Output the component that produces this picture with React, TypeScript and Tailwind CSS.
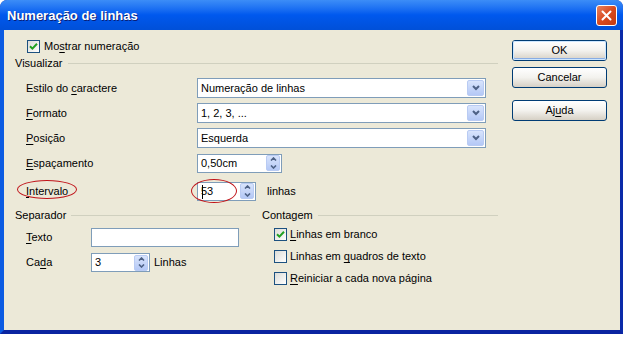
import React from 'react';

const font = { fontFamily: '"Liberation Sans", Arial, sans-serif' };

function Check({ checked = false }: { checked?: boolean }) {
  return (
    <span className="relative flex h-[13px] w-[13px] shrink-0 items-center justify-center border border-[#1C5180] bg-gradient-to-br from-[#DCDCD7] to-white">
      {checked && (
        <svg width="9" height="9" viewBox="0 0 9 9">
          <path d="M1 4.2 L3.4 6.6 L8 1.8" fill="none" stroke="#21A121" strokeWidth="2" />
        </svg>
      )}
    </span>
  );
}

function U({ children }: { children: React.ReactNode }) {
  return <span className="underline underline-offset-[2px]">{children}</span>;
}

function Header({ title, width }: { title: string; width?: string }) {
  return (
    <div className={`flex h-[14px] items-center gap-[5px] ${width ?? ''}`}>
      <span>{title}</span>
      <span className="h-px flex-1 bg-[#D0D0BF]" />
    </div>
  );
}

function Combo({ value }: { value: string }) {
  return (
    <div className="flex h-[20px] w-[289px] items-center border border-[#7F9DB9] bg-white pl-[3px] pr-px">
      <span className="flex-1">{value}</span>
      <span className="flex h-[16px] w-[17px] items-center justify-center rounded-[2px] border border-[#B9CBF3] bg-gradient-to-b from-[#D8E4FC] to-[#B4C8F6]">
        <svg width="8" height="6" viewBox="0 0 8 6">
          <path d="M1 1 L4 4 L7 1" fill="none" stroke="#4D6185" strokeWidth="2" />
        </svg>
      </span>
    </div>
  );
}

function SpinBtn() {
  return (
    <span className="flex h-[16px] w-[14px] flex-col overflow-hidden rounded-[2px] border border-[#B9CBF3] bg-gradient-to-b from-[#D8E4FC] to-[#B4C8F6]">
      <span className="flex flex-1 items-center justify-center border-b border-[#C8D6F6]">
        <svg width="7" height="4" viewBox="0 0 7 4">
          <path d="M1 3.5 L3.5 1 L6 3.5" fill="none" stroke="#4D6185" strokeWidth="1.6" />
        </svg>
      </span>
      <span className="flex flex-1 items-center justify-center">
        <svg width="7" height="4" viewBox="0 0 7 4">
          <path d="M1 0.5 L3.5 3 L6 0.5" fill="none" stroke="#4D6185" strokeWidth="1.6" />
        </svg>
      </span>
    </span>
  );
}

function Spin({ value, width, caret = false }: { value: string; width: string; caret?: boolean }) {
  return (
    <div className={`flex h-[19px] items-center border border-[#7F9DB9] bg-white pl-[3px] pr-px ${width}`}>
      <span className="relative flex-1">
        {caret && <span className="absolute left-[1px] top-[-1px] h-[14px] w-px bg-black" />}
        {value}
      </span>
      <SpinBtn />
    </div>
  );
}

function Row({ label, children, mt }: { label: React.ReactNode; children: React.ReactNode; mt: string }) {
  return (
    <div className={`flex h-[20px] items-center ${mt}`}>
      <span className="ml-[11px] w-[171px]">{label}</span>
      {children}
    </div>
  );
}

function Button({ children, focused = false }: { children: React.ReactNode; focused?: boolean }) {
  return (
    <div className="flex h-[21px] w-[95px] items-center justify-center rounded-[3px] border border-[#003C74] bg-gradient-to-b from-white via-[#F3F2EE] to-[#D6D0C5]">
      <span
        className={`flex h-full w-full items-center justify-center rounded-[2px] ${
          focused ? 'shadow-[inset_0_0_0_1px_#CEE7FF,inset_0_-1px_0_1px_#89ADE4]' : ''
        }`}
      >
        {children}
      </span>
    </div>
  );
}

export default function App() {
  return (
    <div className="h-[338px] w-[625px] bg-white text-[11px] leading-none text-black" style={font}>
      <div className="flex h-[334px] w-[623px] flex-col overflow-hidden rounded-t-[7px] bg-[#0A2AA9]">
        {/* Title bar */}
        <div className="flex h-[30px] shrink-0 items-center justify-between bg-gradient-to-b from-[#3C8DF7] via-[#0058EE] to-[#0050D8] pl-[7px] pr-[6px]">
          <span className="text-[13px] font-bold text-white [text-shadow:1px_1px_0_#0A1E75]">Numeração de linhas</span>
          <span className="flex h-[21px] w-[21px] items-center justify-center rounded-[3px] border border-white bg-gradient-to-br from-[#E7815C] via-[#D9491D] to-[#C23A12]">
            <svg width="11" height="11" viewBox="0 0 11 11">
              <path d="M1.5 1.5 L9.5 9.5 M9.5 1.5 L1.5 9.5" stroke="white" strokeWidth="2" strokeLinecap="round" />
            </svg>
          </span>
        </div>

        {/* Body with frame */}
        <div className="flex flex-1 border-b-[4px] border-l-[4px] border-r-[3px] border-b-[#0A24A0] border-l-[#0B5BE2] border-r-[#0A2AA9]">
          <div className="flex flex-1 bg-[#ECE9D8]">
            {/* Left panel */}
            <div className="flex w-[494px] flex-col pl-[11px]">
              <div className="mt-[10px] flex h-[13px] items-center gap-[4px] pl-[12px]">
                <Check checked />
                <span>
                  Mo<U>s</U>trar numeração
                </span>
              </div>

              <div className="mt-[3px]">
                <Header title="Visualizar" />
              </div>

              <Row mt="mt-[8px]" label={<>Estilo do <U>c</U>aractere</>}>
                <Combo value="Numeração de linhas" />
              </Row>
              <Row mt="mt-[5px]" label={<><U>F</U>ormato</>}>
                <Combo value="1, 2, 3, ..." />
              </Row>
              <Row mt="mt-[5px]" label={<><U>P</U>osição</>}>
                <Combo value="Esquerda" />
              </Row>
              <Row mt="mt-[5px]" label={<><U>E</U>spaçamento</>}>
                <Spin value="0,50cm" width="w-[85px]" />
              </Row>
              <Row
                mt="mt-[8px]"
                label={
                  <span className="relative">
                    <U>I</U>ntervalo
                    <span className="absolute left-[-9px] top-[-5px] h-[19px] w-[60px] rounded-[50%] border border-[#C0141A]" />
                  </span>
                }
              >
                <div className="relative">
                  <Spin value="53" width="w-[59px]" caret />
                  <span className="absolute left-[-6px] top-[-3px] h-[24px] w-[46px] rounded-[50%] border border-[#C0141A]" />
                </div>
                <span className="ml-[11px]">linhas</span>
              </Row>

              <div className="mt-[7px] flex">
                <div className="flex w-[247px] flex-col pr-[12px]">
                  <Header title="Separador" />
                  <div className="mt-[6px] flex h-[19px] items-center">
                    <span className="ml-[11px] w-[65px]">
                      <U>T</U>exto
                    </span>
                    <div className="h-[19px] w-[148px] border border-[#7F9DB9] bg-white" />
                  </div>
                  <div className="mt-[6px] flex h-[19px] items-center">
                    <span className="ml-[11px] w-[65px]">
                      Ca<U>d</U>a
                    </span>
                    <Spin value="3" width="w-[59px]" />
                    <span className="ml-[4px]">Linhas</span>
                  </div>
                </div>
                <div className="flex flex-1 flex-col">
                  <Header title="Contagem" />
                  <div className="mt-[6px] flex flex-col gap-[9px] pl-[12px]">
                    <div className="flex h-[13px] items-center gap-[3px]">
                      <Check checked />
                      <span>
                        <U>L</U>inhas em branco
                      </span>
                    </div>
                    <div className="flex h-[13px] items-center gap-[3px]">
                      <Check />
                      <span>
                        Linhas em <U>q</U>uadros de texto
                      </span>
                    </div>
                    <div className="flex h-[13px] items-center gap-[3px]">
                      <Check />
                      <span>
                        <U>R</U>einiciar a cada nova página
                      </span>
                    </div>
                  </div>
                </div>
              </div>
            </div>

            {/* Buttons */}
            <div className="flex flex-col pl-[14px] pt-[10px]">
              <Button focused>OK</Button>
              <div className="mt-[6px]">
                <Button>Cancelar</Button>
              </div>
              <div className="mt-[12px]">
                <Button>
                  Aj<U>u</U>da
                </Button>
              </div>
            </div>
          </div>
        </div>
      </div>
    </div>
  );
}
